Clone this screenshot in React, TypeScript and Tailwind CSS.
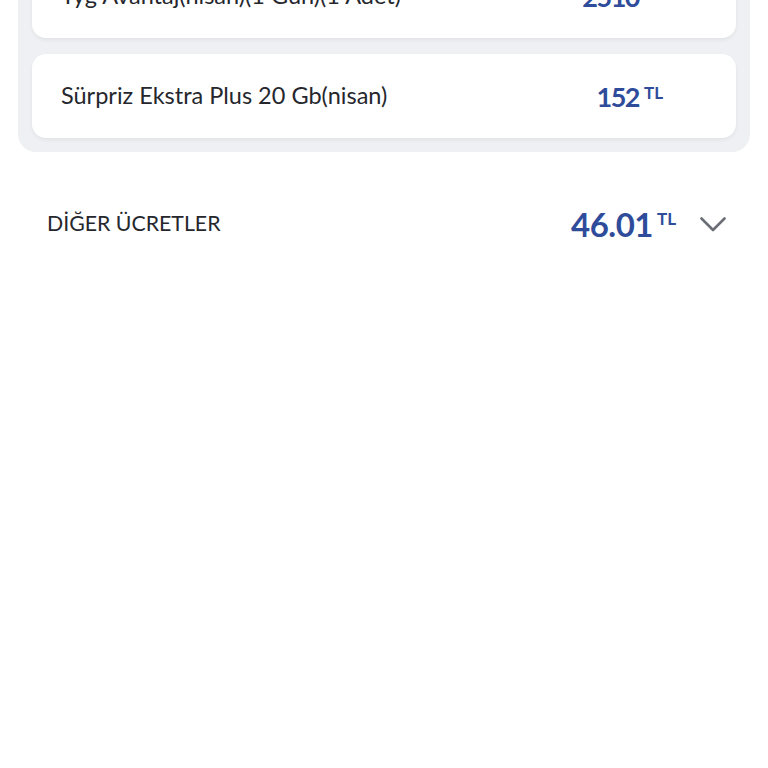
import React from "react";

const font = { fontFamily: "Lato, 'Noto Sans', sans-serif" };

function Price({ value, big }: { value: string; big?: boolean }) {
  return (
    <div className="flex items-start text-[#2f4c9b]">
      <span className={big ? "text-[33px] leading-none font-bold tracking-[-0.5px]" : "text-[27px] leading-none font-bold tracking-[-1.5px]"}>{value}</span>
      <span className={big ? "text-[17px] leading-none font-bold ml-[4px] mt-[2px]" : "text-[17px] leading-none font-bold ml-[5px] mt-[1px]"}>TL</span>
    </div>
  );
}

function Card({ title, price }: { title: string; price: string }) {
  return (
    <div className="h-[84px] bg-white rounded-[14px] shadow-[0_2px_4px_rgba(0,0,0,0.06)] flex items-center pl-[29px] pr-[73px]">
      <div className="flex-1 text-[23.5px] text-[#25272d]">{title}</div>
      <Price value={price} />
    </div>
  );
}

export default function App() {
  return (
    <div className="w-[768px] h-[768px] bg-white overflow-hidden" style={font}>
      <div className="mx-[18px] mt-[-60px] bg-[#eef0f3] rounded-[18px] p-[14px] flex flex-col gap-[16px]">
        <Card title="Tyg Avantaj(nisan)(1 Gün)(1 Adet)" price="2510" />
        <Card title="Sürpriz Ekstra Plus 20 Gb(nisan)" price="152" />
      </div>
      <div className="mx-[18px] mt-[48px] h-[48px] flex items-center pl-[29px] pr-[24px]">
        <div className="flex-1 text-[21.3px] text-[#25272d]">DİĞER ÜCRETLER</div>
        <Price value="46.01" big />
        <svg width="26" height="15" viewBox="0 0 26 15" className="ml-[24px]" fill="none">
          <polyline points="1.5,1.5 13,13 24.5,1.5" stroke="#6b6e75" strokeWidth="2.6" strokeLinecap="round" strokeLinejoin="round" />
        </svg>
      </div>
    </div>
  );
}
